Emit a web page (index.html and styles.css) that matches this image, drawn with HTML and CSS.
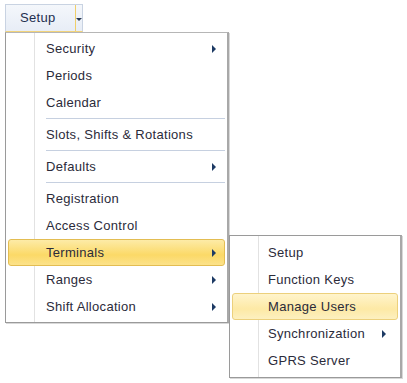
FILE: index.html
```html
<html lang="en">

<head>
    <meta charset="UTF-8">
    <title>Setup Menu</title>
    <link rel="stylesheet" href="styles.css">
</head>

<body>

    <div class="toolbar">
        <div class="split-btn">
            <span class="btn-label">Setup</span>
            <span class="btn-drop"><i class="caret"></i></span>
        </div>
    </div>

    <div class="menu main-menu">
        <div class="item sub">Security</div>
        <div class="item">Periods</div>
        <div class="item">Calendar</div>
        <div class="sep"></div>
        <div class="item">Slots, Shifts &amp; Rotations</div>
        <div class="sep"></div>
        <div class="item sub">Defaults</div>
        <div class="sep"></div>
        <div class="item">Registration</div>
        <div class="item">Access Control</div>
        <div class="item sub open">Terminals
            <div class="menu sub-menu">
                <div class="item">Setup</div>
                <div class="item">Function Keys</div>
                <div class="item hover">Manage Users</div>
                <div class="item sub">Synchronization</div>
                <div class="item">GPRS Server</div>
            </div>
        </div>
        <div class="item sub">Ranges</div>
        <div class="item sub">Shift Allocation</div>
    </div>

</body>

</html>
```

FILE: styles.css
```css
body {
    margin: 0;
    padding: 0;
    background: #ffffff;
    font-family: "Liberation Sans", Arial, sans-serif;
    font-size: 13px;
    letter-spacing: 0.3px;
    color: #2b2b3a;
}
.toolbar {
    height: 32px;
    padding-left: 5px;
    padding-top: 4px;
    box-sizing: border-box;
}
.split-btn {
    display: flex;
    width: 78px;
    height: 28px;
    box-sizing: border-box;
    background: linear-gradient(#f4f7fb, #e7edf6);
    border: 1px solid #c9d3e2;
    border-bottom: 1px solid #f2d37a;
}
.btn-label {
    width: 65px;
    padding-left: 14px;
    line-height: 26px;
    color: #1f2f4f;
    border-right: 1px solid #f0cf6a;
}
.btn-drop {
    flex: 1;
    display: flex;
    align-items: center;
    justify-content: center;
}
.caret {
    width: 0;
    height: 0;
    border-left: 3px solid transparent;
    border-right: 3px solid transparent;
    border-top: 3px solid #2a3a55;
    margin-top: 2px;
}
.menu {
    background: #ffffff;
    border: 1px solid #9a9a9a;
    border-right: 2px solid #a8a8a8;
    box-shadow: 1px 1px 0 #d8d8d8;
    padding: 2px;
    position: relative;
}
.menu::before {
    content: "";
    position: absolute;
    top: 0;
    bottom: 0;
    left: 28px;
    width: 1px;
    background: #e2e2e2;
    box-shadow: 1px 0 0 #ffffff;
}
.main-menu {
    width: 217px;
    margin-left: 5px;
    border-top-color: #b6b6b6;
}
.item {
    position: relative;
    height: 27px;
    line-height: 27px;
    padding-left: 38px;
    white-space: nowrap;
    z-index: 1;
}
.item.sub::after {
    content: "";
    position: absolute;
    right: 9px;
    top: 10px;
    width: 0;
    height: 0;
    border-top: 4px solid transparent;
    border-bottom: 4px solid transparent;
    border-left: 4px solid #1d3a64;
}
.sep {
    height: 1px;
    margin: 2px 0 1px 38px;
    background: #c6d0e0;
    border-bottom: 1px solid #ffffff;
    position: relative;
    z-index: 1;
}
.open,
.hover {
    border-radius: 3px;
    border: 1px solid #e3bd52;
    padding-left: 37px;
    height: 25px;
    line-height: 25px;
}
.open {
    background: linear-gradient(#fdeba7, #fbd967 60%, #fce28a);
}
.open.sub::after {
    right: 8px;
    top: 9px;
}
.hover {
    background: linear-gradient(#fff4cc, #fde9a5 60%, #fdf0c0);
    border-color: #ecd07c;
}
.sub-menu {
    position: absolute;
    left: 220px;
    top: -5px;
    width: 166px;
    padding: 3px 2px;
    line-height: normal;
}
.sub-menu .item {
    padding-left: 36px;
}
.sub-menu .hover {
    padding-left: 35px;
}
.sub-menu .item.sub::after {
    right: 12px;
}
```
